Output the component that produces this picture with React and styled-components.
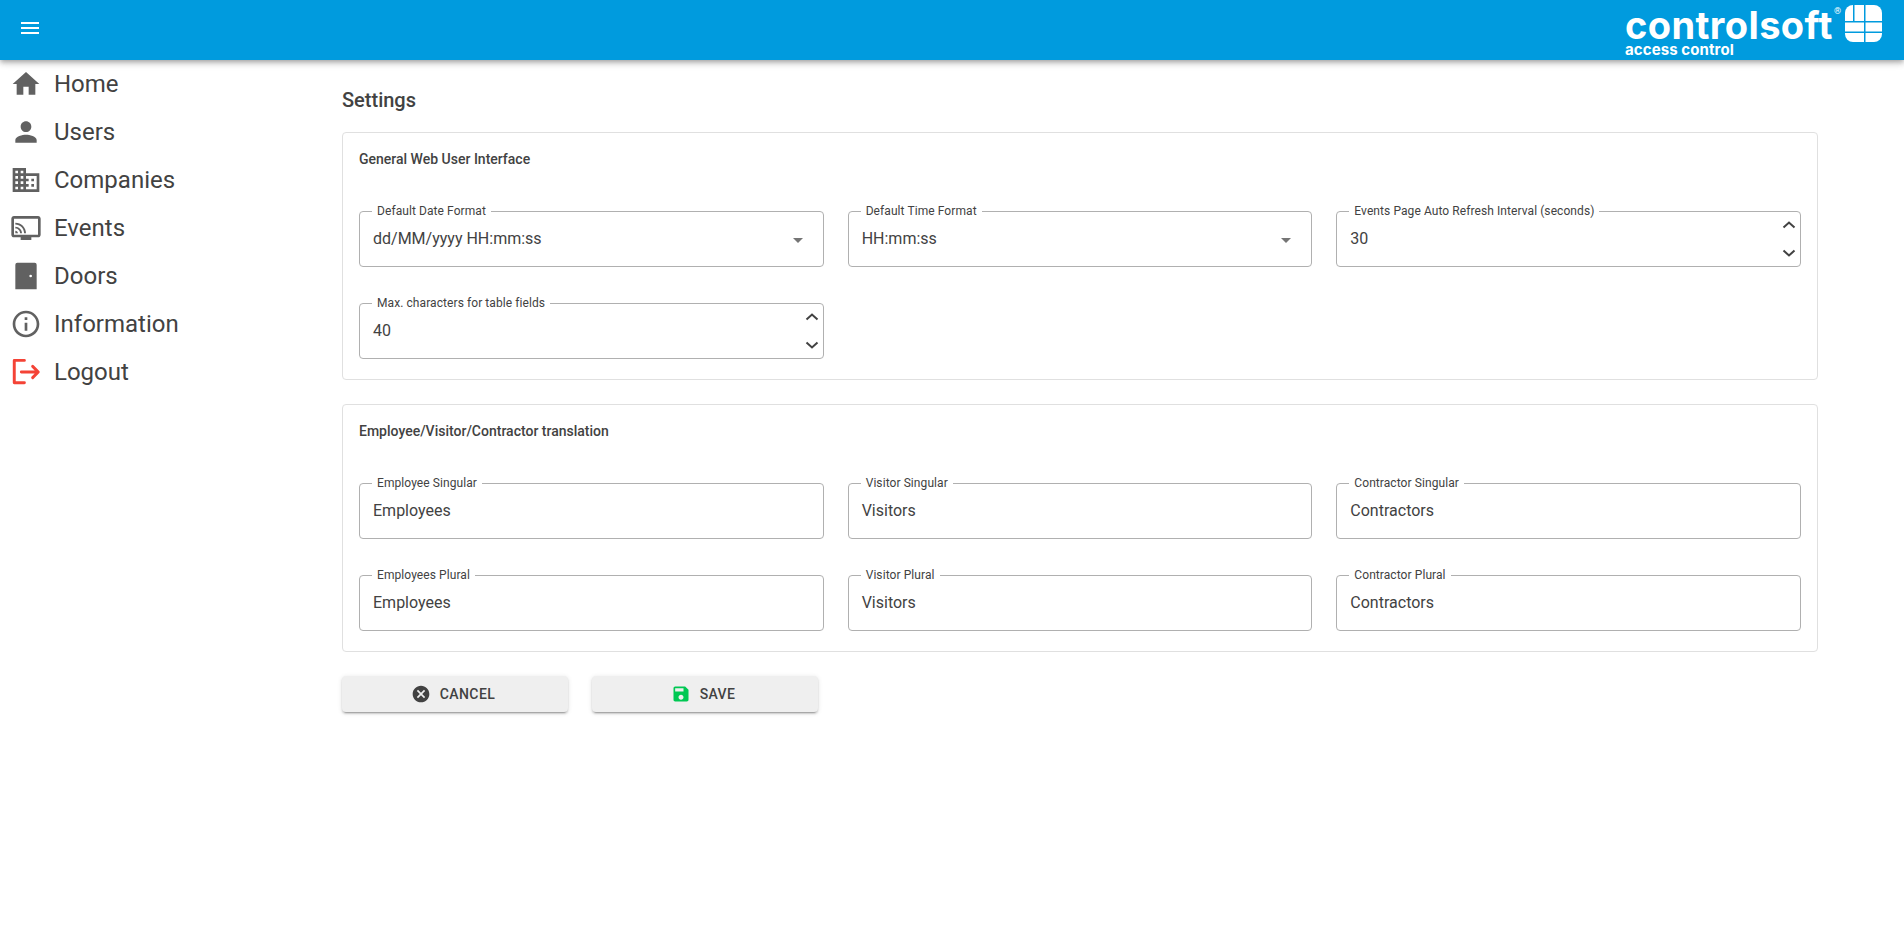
import React from 'react';
import styled, { createGlobalStyle } from 'styled-components';

const Global = createGlobalStyle`
  html, body { margin: 0; padding: 0; background: #fff; }
  body { font-family: Roboto, "Liberation Sans", sans-serif; color: #424242; }
`;

const Header = styled.header`
  height: 60px;
  background: #009bde;
  box-shadow: 0 2px 4px -1px rgba(0,0,0,.2), 0 4px 5px 0 rgba(0,0,0,.14), 0 1px 10px 0 rgba(0,0,0,.12);
  display: flex;
  align-items: flex-start;
  justify-content: space-between;
  position: relative;
`;
const MenuBtn = styled.div`
  padding: 16px 18px;
  color: #fff;
  display: flex;
`;
const Logo = styled.div`
  display: flex;
  align-items: flex-start;
  margin-right: 22px;
  color: #fff;
`;
const LogoWords = styled.div`
  display: flex;
  flex-direction: column;
  padding-top: 6px;
`;
const LogoName = styled.span`
  font-family: Inter, sans-serif;
  font-weight: 700;
  font-size: 38px;
  line-height: 38px;
  letter-spacing: .4px;
`;
const LogoSub = styled.span`
  font-family: Inter, sans-serif;
  font-weight: 700;
  font-size: 15px;
  line-height: 12px;
  letter-spacing: .1px;
`;
const Reg = styled.span`
  font-size: 9px;
  line-height: 10px;
  margin: 6px 4px 0 1px;
`;
const Body = styled.div`
  display: flex;
  min-height: 876px;
`;
const Side = styled.nav`
  width: 342px;
  flex: none;
`;
const NavItem = styled.div`
  height: 48px;
  display: flex;
  align-items: center;
  padding-left: 10px;
  gap: 12px;
  font-size: 24px;
  color: #424242;
`;
const NavIcon = styled.svg`
  width: 32px;
  height: 32px;
  fill: ${p => p.$color || '#616161'};
  flex: none;
`;
const Main = styled.main`
  width: 1476px;
  padding: 28px 0 40px;
`;
const PageTitle = styled.h1`
  margin: 0 0 20px;
  font-size: 20px;
  line-height: 24px;
  font-weight: 500;
  color: #424242;
`;
const Card = styled.section`
  border: 1px solid #e0e0e0;
  border-radius: 4px;
  padding: 16px 16px 20px;
  margin-bottom: 24px;
`;
const CardTitle = styled.h2`
  margin: 0 0 35px;
  font-size: 14px;
  line-height: 20px;
  font-weight: 500;
  color: #424242;
`;
const Grid = styled.div`
  display: grid;
  grid-template-columns: repeat(3, 1fr);
  column-gap: 24px;
  row-gap: 29px;
`;
const Field = styled.fieldset`
  margin: 0;
  padding: 0 13px;
  height: 63px;
  box-sizing: border-box;
  border: 1px solid #b0b0b0;
  border-radius: 4px;
  display: flex;
  align-items: center;
  justify-content: space-between;
  position: relative;
  min-width: 0;
`;
const Legend = styled.legend`
  font-size: 12px;
  line-height: 14px;
  padding: 0 5px;
  margin-left: -1px;
  letter-spacing: .08px;
  color: #424242;
`;
const Value = styled.span`
  font-size: 16px;
  color: #424242;
  margin-top: -8px;
`;
const Caret = styled.span`
  width: 0;
  height: 0;
  border-left: 5px solid transparent;
  border-right: 5px solid transparent;
  border-top: 5px solid #757575;
  margin: -3px 7px 0 0;
`;
const Spinner = styled.div`
  position: absolute;
  right: 3px;
  top: -1px;
  bottom: 5px;
  display: flex;
  flex-direction: column;
  justify-content: space-between;
`;
const Chevron = styled.svg`
  width: 16px;
  height: 16px;
  fill: none;
  stroke: #424242;
  stroke-width: 2;
  display: block;
`;
const Actions = styled.div`
  display: flex;
  gap: 24px;
`;
const Button = styled.div`
  width: 226px;
  height: 36px;
  box-sizing: border-box;
  padding-right: 4px;
  background: #efefef;
  border-radius: 4px;
  box-shadow: 0 3px 1px -2px rgba(0,0,0,.2), 0 2px 2px 0 rgba(0,0,0,.14), 0 1px 5px 0 rgba(0,0,0,.12);
  display: flex;
  align-items: center;
  justify-content: center;
  gap: 9px;
  font-size: 14px;
  font-weight: 500;
  letter-spacing: .4px;
  color: #424242;
`;
const BtnIcon = styled.svg`
  width: 20px;
  height: 20px;
  fill: ${p => p.$color};
`;

const icons = {
  home: <path d="M10 20v-6h4v6h5v-8h3L12 3 2 12h3v8z" />,
  user: <path d="M12 12c2.21 0 4-1.79 4-4s-1.79-4-4-4-4 1.79-4 4 1.79 4 4 4zm0 2c-2.67 0-8 1.34-8 4v2h16v-2c0-2.66-5.33-4-8-4z" />,
  company: <path d="M12 7V3H2v18h20V7H12zM6 19H4v-2h2v2zm0-4H4v-2h2v2zm0-4H4V9h2v2zm0-4H4V5h2v2zm4 12H8v-2h2v2zm0-4H8v-2h2v2zm0-4H8V9h2v2zm0-4H8V5h2v2zm10 12h-8v-2h2v-2h-2v-2h2v-2h-2V9h8v10zm-2-8h-2v2h2v-2zm0 4h-2v2h2v-2z" />,
  events: <path d="M21 3H3c-1.1 0-2 .9-2 2v12c0 1.1.9 2 2 2h5v2h8v-2h5c1.1 0 1.99-.9 1.99-2L23 5c0-1.1-.9-2-2-2zm0 14H3V5h18v12zM4 14v2h2c0-1.11-.89-2-2-2zm0-3v1.43c1.97 0 3.57 1.6 3.57 3.57H9c0-2.76-2.24-5-5-5zm0-3v1.45c3.61 0 6.55 2.93 6.55 6.55H12c0-4.42-3.59-8-8-8z" />,
  door: <path fillRule="evenodd" d="M5.5 2h13A1.500 1.500 0 0 1 20 3.500V22H4V3.500A1.500 1.500 0 0 1 5.500 2zm10 11a1 1 0 1 0 0-2 1 1 0 0 0 0 2z" />,
  info: <path d="M11 7h2v2h-2zm0 4h2v6h-2zm1-9C6.48 2 2 6.48 2 12s4.48 10 10 10 10-4.48 10-10S17.52 2 12 2zm0 18c-4.41 0-8-3.59-8-8s3.59-8 8-8 8 3.590 8 8-3.590 8-8 8z" />,
  logout: (
    <g fill="none" stroke="#f44336" strokeWidth="2.2" strokeLinejoin="round" strokeLinecap="round">
      <path d="M10.800 3.300H3.200V20H10.800" />
      <path d="M8.500 12H21M17 7.800l4.200 4.200L17 16.200" />
    </g>
  ),
};

const navItems = [
  ['Home', 'home'],
  ['Users', 'user'],
  ['Companies', 'company'],
  ['Events', 'events'],
  ['Doors', 'door'],
  ['Information', 'info'],
  ['Logout', 'logout', '#f44336'],
];

const general = [
  { label: 'Default Date Format', value: 'dd/MM/yyyy HH:mm:ss', kind: 'select' },
  { label: 'Default Time Format', value: 'HH:mm:ss', kind: 'select' },
  { label: 'Events Page Auto Refresh Interval (seconds)', value: '30', kind: 'number' },
  { label: 'Max. characters for table fields', value: '40', kind: 'number' },
];

const translation = [
  { label: 'Employee Singular', value: 'Employees' },
  { label: 'Visitor Singular', value: 'Visitors' },
  { label: 'Contractor Singular', value: 'Contractors' },
  { label: 'Employees Plural', value: 'Employees' },
  { label: 'Visitor Plural', value: 'Visitors' },
  { label: 'Contractor Plural', value: 'Contractors' },
];

function FormField({ label, value, kind }) {
  return (
    <Field>
      <Legend>{label}</Legend>
      <Value>{value}</Value>
      {kind === 'select' && <Caret />}
      {kind === 'number' && (
        <Spinner>
          <Chevron viewBox="0 0 16 16"><path d="M2.500 10.500l5.500-5 5.500 5" /></Chevron>
          <Chevron viewBox="0 0 16 16"><path d="M2.500 5.500l5.500 5 5.500-5" /></Chevron>
        </Spinner>
      )}
    </Field>
  );
}

function LogoMark() {
  return (
    <svg width="37" height="37" viewBox="0 0 37 37" style={{ marginTop: 5, flex: 'none' }}>
      <g fill="#fff">
        <path d="M0 8a8 8 0 0 1 8-8v16H0z" />
        <path d="M9.500 0h9.500v16H9.500z" />
        <path d="M20.500 0h8.500a8 8 0 0 1 8 8v8H20.500z" />
        <path d="M0 17.500h19v9H0z" />
        <path d="M20.500 17.500h16.500v9H20.500z" />
        <path d="M0 28h19v9H8a8 8 0 0 1-8-8z" />
        <path d="M20.500 28h16.500v1a8 8 0 0 1-8 8h-8.500z" />
      </g>
    </svg>
  );
}

export default function App() {
  return (
    <>
      <Global />
      <Header>
        <MenuBtn>
          <svg width="24" height="24" viewBox="0 0 24 24" fill="currentColor">
            <path d="M3 18h18v-2H3v2zm0-5h18v-2H3v2zm0-7v2h18V6H3z" />
          </svg>
        </MenuBtn>
        <Logo>
          <LogoWords>
            <LogoName>controlsoft</LogoName>
            <LogoSub>access control</LogoSub>
          </LogoWords>
          <Reg>®</Reg>
          <LogoMark />
        </Logo>
      </Header>
      <Body>
        <Side>
          {navItems.map(([label, icon, color]) => (
            <NavItem key={label}>
              <NavIcon viewBox="0 0 24 24" $color={color}>{icons[icon]}</NavIcon>
              {label}
            </NavItem>
          ))}
        </Side>
        <Main>
          <PageTitle>Settings</PageTitle>
          <Card>
            <CardTitle>General Web User Interface</CardTitle>
            <Grid>
              {general.map(f => <FormField key={f.label} {...f} />)}
            </Grid>
          </Card>
          <Card>
            <CardTitle>Employee/Visitor/Contractor translation</CardTitle>
            <Grid>
              {translation.map(f => <FormField key={f.label} {...f} />)}
            </Grid>
          </Card>
          <Actions>
            <Button>
              <BtnIcon viewBox="0 0 24 24" $color="#424242">
                <path d="M12 2C6.470 2 2 6.470 2 12s4.470 10 10 10 10-4.470 10-10S17.530 2 12 2zm5 13.590L15.590 17 12 13.410 8.410 17 7 15.590 10.590 12 7 8.410 8.410 7 12 10.590 15.590 7 17 8.410 13.410 12 17 15.590z" />
              </BtnIcon>
              CANCEL
            </Button>
            <Button>
              <BtnIcon viewBox="0 0 24 24" $color="#00c853">
                <path d="M17 3H5c-1.110 0-2 .9-2 2v14c0 1.100.89 2 2 2h14c1.100 0 2-.9 2-2V7l-4-4zm-5 16c-1.660 0-3-1.340-3-3s1.340-3 3-3 3 1.340 3 3-1.340 3-3 3zm3-10H5V5h10v4z" />
              </BtnIcon>
              SAVE
            </Button>
          </Actions>
        </Main>
      </Body>
    </>
  );
}
